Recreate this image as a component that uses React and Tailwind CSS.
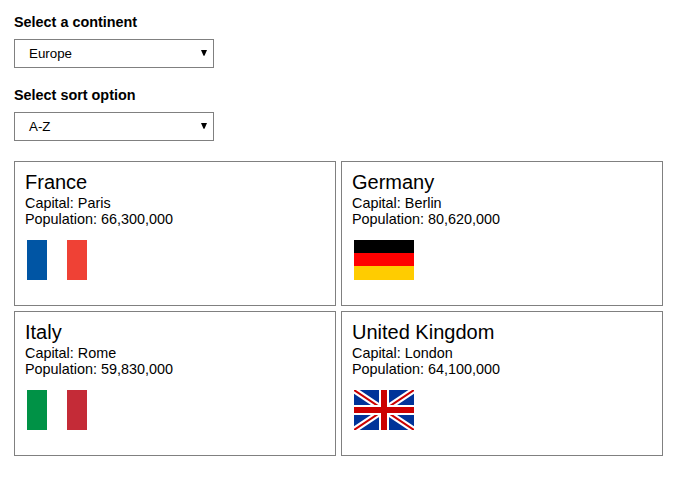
const countries = [
  { name: "France", capital: "Paris", population: "66,300,000", Flag: FranceFlag },
  { name: "Germany", capital: "Berlin", population: "80,620,000", Flag: GermanyFlag },
  { name: "Italy", capital: "Rome", population: "59,830,000", Flag: ItalyFlag },
  { name: "United Kingdom", capital: "London", population: "64,100,000", Flag: UnitedKingdomFlag },
];

function FranceFlag() {
  return (
    <svg width="60" height="40" viewBox="0 0 60 40">
      <rect width="60" height="40" fill="#fff" />
      <rect width="20" height="40" fill="#0055a4" />
      <rect x="40" width="20" height="40" fill="#ef4135" />
    </svg>
  );
}

function GermanyFlag() {
  return (
    <svg width="60" height="40" viewBox="0 0 60 40">
      <rect width="60" height="13" fill="#000" />
      <rect y="13" width="60" height="13" fill="#f00" />
      <rect y="26" width="60" height="14" fill="#fc0" />
    </svg>
  );
}

function ItalyFlag() {
  return (
    <svg width="60" height="40" viewBox="0 0 60 40">
      <rect width="60" height="40" fill="#fff" />
      <rect width="20" height="40" fill="#009246" />
      <rect x="40" width="20" height="40" fill="#c42b37" />
    </svg>
  );
}

function UnitedKingdomFlag() {
  return (
    <svg width="60" height="40" viewBox="0 0 60 40">
      <rect width="60" height="40" fill="#039" />
      <path d="M0 0L60 40M60 0L0 40" stroke="#fff" strokeWidth="6.2" />
      <path d="M0 0L60 40M60 0L0 40" stroke="#c00" strokeWidth="2" />
      <path d="M25 0H35V15H60V25H35V40H25V25H0V15H25Z" fill="#fff" />
      <path d="M27 0H33V17H60V23H33V40H27V23H0V17H27Z" fill="#c00" />
    </svg>
  );
}

function SelectField({ label, value }) {
  return (
    <div>
      <div className="text-[14.4px] leading-4 font-bold">{label}</div>
      <button className="mt-[9px] flex h-[29px] w-[200px] items-center justify-between border border-[#808080] bg-white pr-[6px] pl-[14px] text-[13.333px] leading-[15px]">
        <span>{value}</span>
        <svg width="6" height="6" viewBox="0 0 6 6" className="mb-px">
          <path d="M0 0H6L3.5 5.7H2.5Z" fill="#000" />
        </svg>
      </button>
    </div>
  );
}

function CountryCard({ name, capital, population, Flag }) {
  return (
    <div className="h-[145px] border border-[#808080] px-[10px] pt-2">
      <h2 className="mb-px text-[20px] leading-[24px]">{name}</h2>
      <p className="text-[14.4px] leading-4">Capital: {capital}</p>
      <p className="text-[14.4px] leading-4">Population: {population}</p>
      <div className="mt-[13px] ml-[2px]">
        <Flag />
      </div>
    </div>
  );
}

export default function App() {
  return (
    <main className="min-h-screen bg-white px-[14px] pt-[14px] font-['Liberation_Sans',Arial,sans-serif] text-black">
      <div className="flex flex-col gap-[19px]">
        <SelectField label="Select a continent" value="Europe" />
        <SelectField label="Select sort option" value="A-Z" />
      </div>
      <section className="mt-5 grid w-[649px] grid-cols-2 gap-[5px]">
        {countries.map((country) => (
          <CountryCard key={country.name} {...country} />
        ))}
      </section>
    </main>
  );
}
